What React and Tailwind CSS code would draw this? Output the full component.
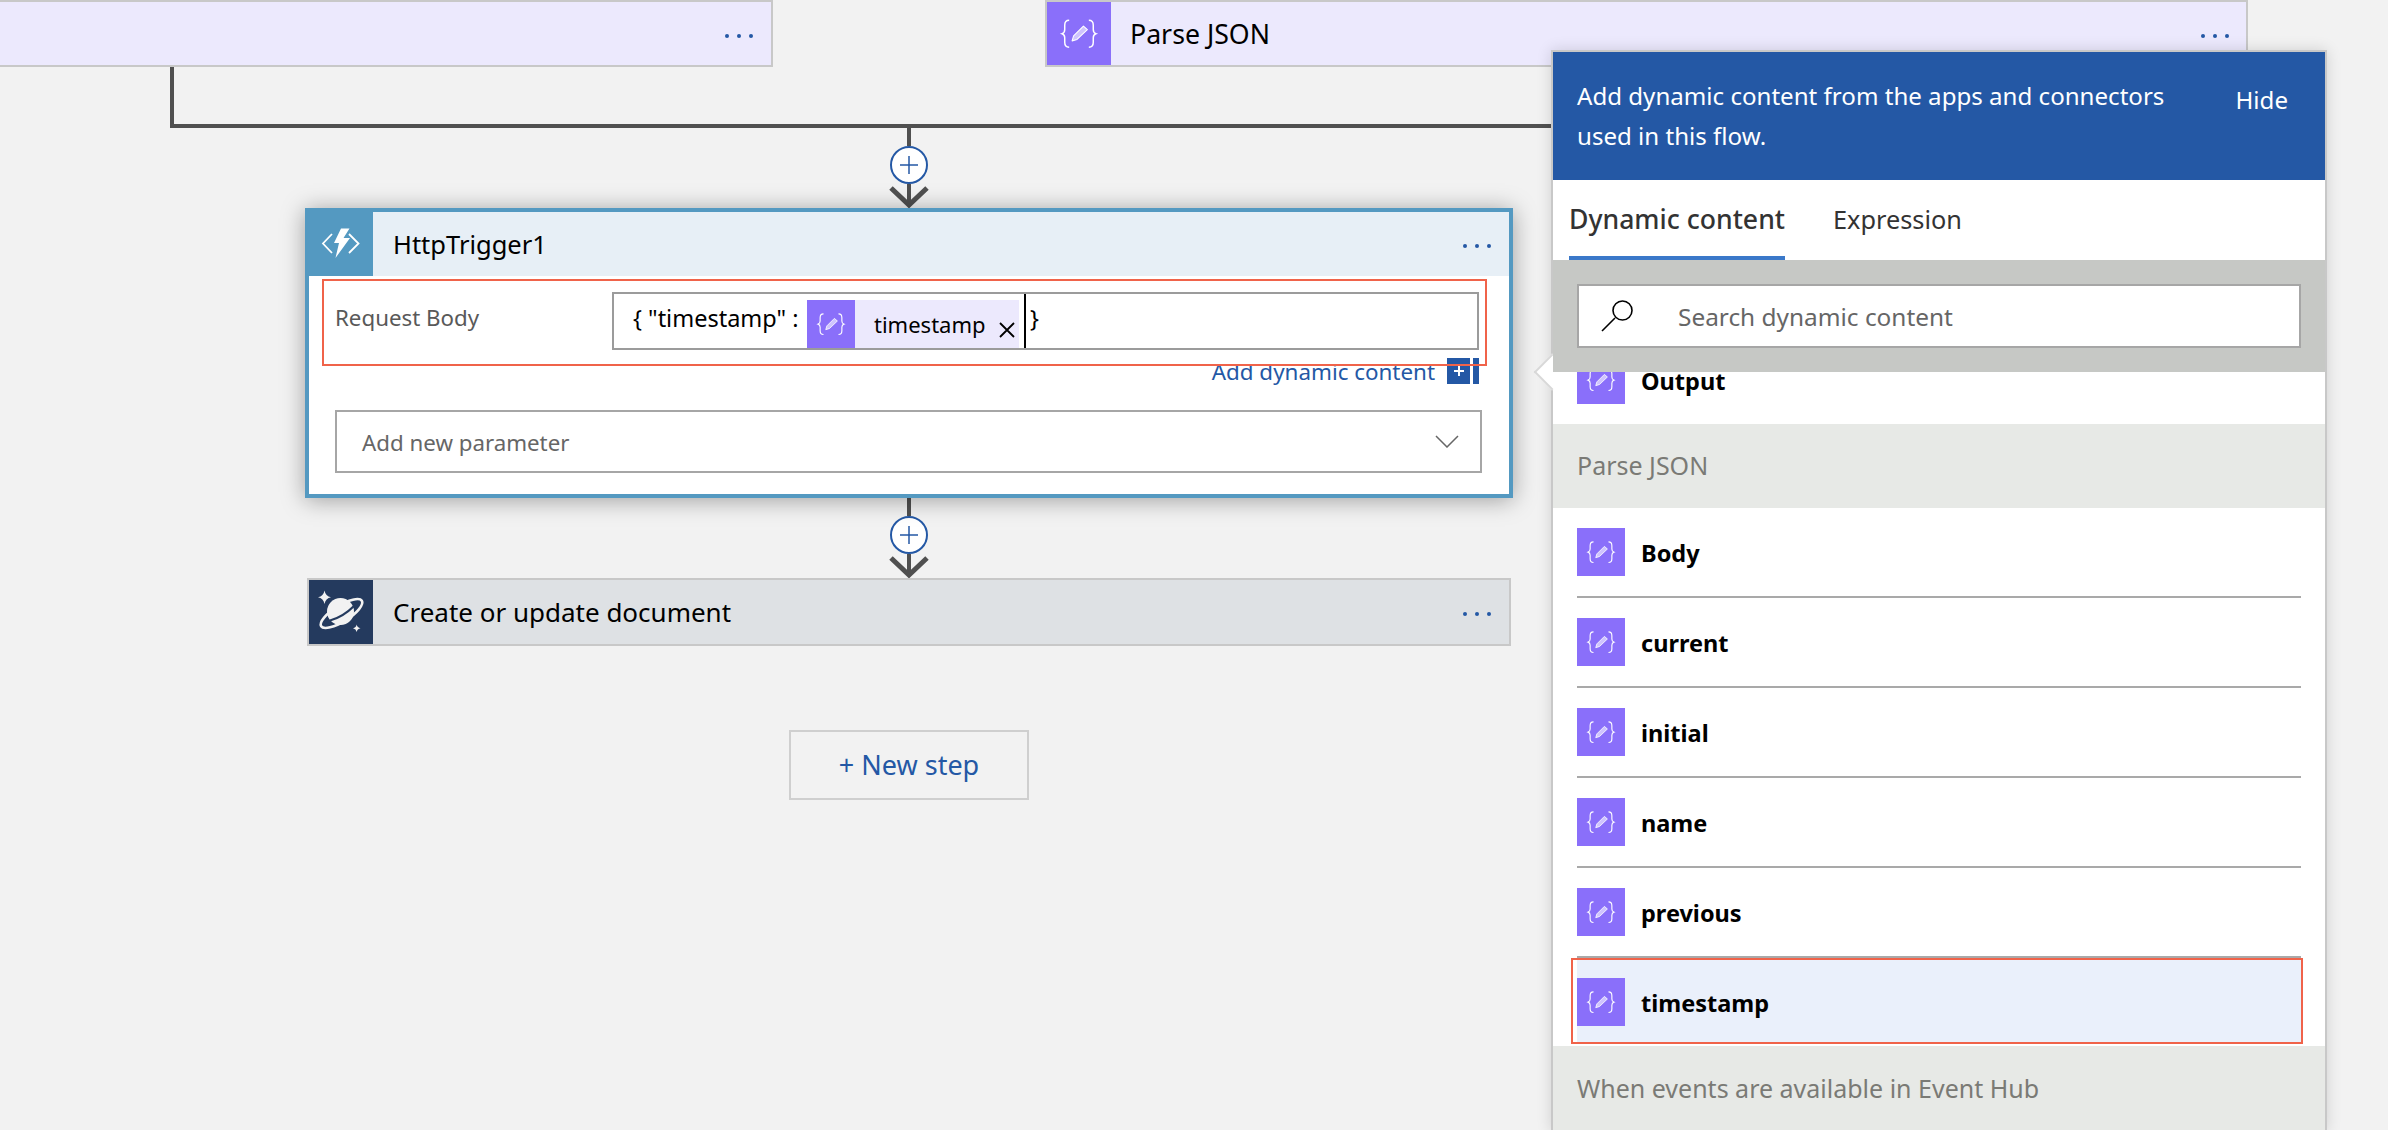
import React from "react";

function Dots() {
  return (
    <div className="flex gap-2 mt-1 shrink-0">
      <span className="size-1 rounded-full bg-[#2458a5]" />
      <span className="size-1 rounded-full bg-[#2458a5]" />
      <span className="size-1 rounded-full bg-[#2458a5]" />
    </div>
  );
}

function ExprGlyph({ className }) {
  return (
    <svg viewBox="0 0 64 64" className={className} fill="none">
      <path d="M22 18.500c-3.500 0-4.500 1.600-4.500 5v4.500c0 2.500-.8 3.600-2.600 4.200 1.800.6 2.600 1.700 2.600 4.200v4.600c0 3.400 1 5 4.500 5" stroke="#fff" strokeWidth="1.500" />
      <path d="M42 18.500c3.500 0 4.500 1.600 4.500 5v4.500c0 2.500.8 3.600 2.600 4.200-1.800.6-2.600 1.700-2.600 4.200v4.600c0 3.400-1 5-4.500 5" stroke="#fff" strokeWidth="1.500" />
      <path d="M36.500 24.500l4 3.500-10.500 10-5 1.500 1.500-5z" fill="#cfc4fe" stroke="#fff" strokeWidth="1.100" strokeLinejoin="round" />
    </svg>
  );
}

function ExprIcon({ box = "size-12" }) {
  return (
    <div className={`${box} bg-[#8a6ffa] shrink-0`}>
      <ExprGlyph className="size-full" />
    </div>
  );
}

function Connector() {
  return (
    <div className="flex flex-col items-center w-10 h-20 shrink-0">
      <div className="w-1 h-[18px] bg-[#505050]" />
      <div className="size-[38px] rounded-full border-2 border-[#2458a5] bg-white flex items-center justify-center shrink-0">
        <svg viewBox="0 0 20 20" className="size-5" fill="none" stroke="#2458a5" strokeWidth="1.500">
          <path d="M10 1v18M1 10h18" />
        </svg>
      </div>
      <svg viewBox="0 0 40 24" className="w-10 h-6 shrink-0" fill="none" stroke="#505050">
        <path d="M20 0v21" strokeWidth="4" />
        <path d="M2 4l18 17L38 4" strokeWidth="5" />
      </svg>
    </div>
  );
}

function Row({ label }) {
  return (
    <div className="mx-6">
      <div className="flex items-center pt-5 pb-5 border-b-2 border-[#a9a9a9]">
        <ExprIcon />
        <span className="ml-4 pt-[3px] text-[23.500px] font-bold text-black leading-none">{label}</span>
      </div>
    </div>
  );
}

export default function App() {
  return (
    <div className="relative w-[2388px] h-[1130px] overflow-hidden bg-[#f2f2f2] font-['Noto_Sans',sans-serif]">
      {/* top cards */}
      <div className="flex">
        <div className="w-[773px] h-[67px] bg-[#ece9fd] border-2 border-l-0 border-[#c8c8c8] flex items-center justify-end pr-[18px]">
          <Dots />
        </div>
        <div className="ml-[272px] w-[1203px] h-[67px] bg-[#ece9fd] border-2 border-[#c8c8c8] flex items-center pr-[17px]">
          <div className="w-16 h-full bg-[#8a6ffa] shrink-0">
            <ExprGlyph className="size-full" />
          </div>
          <span className="ml-[19px] pt-[2px] flex-1 text-[26.700px] text-black">Parse JSON</span>
          <Dots />
        </div>
      </div>

      {/* branch join */}
      <div className="ml-[170px] w-[1400px] h-[61px] border-l-4 border-b-4 border-[#505050]" />

      {/* flow column */}
      <div className="ml-[305px] w-[1208px] flex flex-col items-center">
        <Connector />

        <div className="relative w-full h-[290px] border-4 border-[#5499c1] bg-white shadow-[0_2px_22px_rgba(0,0,0,0.35)]">
          <div className="flex items-center h-16 bg-[#e7eff6] pr-[18px]">
            <div className="w-16 h-full bg-[#5499c1] shrink-0">
              <svg viewBox="9 7 64 64" className="size-full" fill="none">
                <path d="M32 29L23 38.500L32 48M49 29L58.500 38.500L49 48" stroke="#fff" strokeWidth="1.800" />
                <path d="M41 23.500L49.500 23.500L43.500 33L50 33L35.500 53L39 38L34 38Z" fill="#fff" />
              </svg>
            </div>
            <span className="ml-5 flex-1 text-[25.500px] text-black">HttpTrigger1</span>
            <Dots />
          </div>

          <div className="pl-[26px] pr-[30px]">
            <div className="flex mt-4 h-[58px]">
              <span className="w-[277px] shrink-0 pt-[11px] text-[22.300px] text-[#595959] leading-[30px]">Request Body</span>
              <div className="flex flex-1 items-end border-2 border-[#9b9b9b] pl-[19px]">
                <span className="self-start w-[174px] shrink-0 pt-[9px] text-[23.500px] leading-[30px] text-black whitespace-pre">{'{ "timestamp" :'}</span>
                <div className="flex h-12 w-[212px] shrink-0 bg-[#ece9fd]">
                  <ExprIcon />
                  <span className="ml-[19px] w-[113px] pt-[9px] text-[22px] leading-[30px] text-black">timestamp</span>
                  <svg viewBox="0 0 18 16" className="ml-[11px] mt-[22px] w-[18px] h-4" stroke="#000" strokeWidth="1.800" fill="none">
                    <path d="M2 1l14 14M16 1L2 15" />
                  </svg>
                </div>
                <div className="ml-[5px] w-0.5 h-full bg-black" />
                <span className="self-start ml-[4px] pt-[9px] text-[23.500px] leading-[30px] text-black">{"}"}</span>
              </div>
            </div>

            <div className="flex justify-end items-center gap-3 mt-2 h-[26px]">
              <span className="pt-[2px] text-[22.400px] leading-none text-[#2458a5]">Add dynamic content</span>
              <div className="flex h-[26px] gap-[3px]">
                <div className="w-[23px] bg-[#2458a5] flex items-center justify-center">
                  <svg viewBox="0 0 12 12" className="size-3" stroke="#fff" strokeWidth="2">
                    <path d="M6 1v10M1 6h10" />
                  </svg>
                </div>
                <div className="w-1.5 bg-[#2458a5]" />
              </div>
            </div>

            <div className="flex items-center justify-between mt-[26px] mr-[-3px] h-[63px] border-2 border-[#a6a6a6] pl-[25px] pr-[21px]">
              <span className="text-[22.300px] text-[#666666] pt-[2px]">Add new parameter</span>
              <svg viewBox="0 0 24 13" className="w-6 h-[13px]" fill="none" stroke="#666666" strokeWidth="1.500">
                <path d="M1 1l11 11L23 1" />
              </svg>
            </div>
          </div>

          {/* annotation */}
          <div className="absolute left-[13px] top-[67px] w-[1165px] h-[87px] border-2 border-[#f0634a] pointer-events-none" />
        </div>

        <Connector />

        <div className="w-[1204px] h-[68px] bg-[#dee1e4] border-2 border-[#c8c8c8] flex items-center pr-[18px]">
          <div className="w-16 h-full bg-[#243a5e] shrink-0">
            <svg viewBox="9 10 64 64" className="size-full" fill="none">
              <path d="M24.500 20.500Q25.500 26.300 31 27.300Q25.500 28.300 24.500 34Q23.500 28.300 18 27.300Q23.500 26.300 24.500 20.500Z" fill="#f2f2f2" />
              <path d="M56.700 54.500Q57.300 57.700 60.500 58.300Q57.300 58.900 56.700 62Q56.100 58.900 53 58.300Q56.100 57.700 56.700 54.500Z" fill="#f2f2f2" />
              <ellipse cx="41.500" cy="43.500" rx="24" ry="8" transform="rotate(-32 41.500 43.500)" stroke="#f2f2f2" strokeWidth="2.600" />
              <circle cx="40.500" cy="41.500" r="13.500" fill="#f2f2f2" />
              <path d="M30 50.500Q43 47 54 36" stroke="#243a5e" strokeWidth="2.200" />
            </svg>
          </div>
          <span className="ml-5 flex-1 text-[26px] text-black">Create or update document</span>
          <Dots />
        </div>

        <div className="mt-[84px] w-[240px] h-[70px] border-2 border-[#cfcfcf] flex items-center justify-center text-[27px] text-[#2458a5]">
          + New step
        </div>
      </div>

      {/* dynamic content panel */}
      <div className="absolute left-[1551px] top-[50px] w-[776px] h-[1082px] border-2 border-[#c8c8c8] bg-white shadow-[0_0_14px_rgba(0,0,0,0.14)] flex flex-col">
        <div className="absolute left-[-14px] top-[307px] size-[26px] rotate-45 bg-white border-l-2 border-b-2 border-[#d8d8d8]" />

        <div className="relative z-10 flex justify-between h-[128px] bg-[#2458a5] pl-6 pr-[37px] text-white text-[24.100px]">
          <p className="w-[620px] pt-[24px] leading-[40px]">Add dynamic content from the apps and connectors used in this flow.</p>
          <span className="pt-[32px] leading-[32px]">Hide</span>
        </div>

        <div className="relative z-10 flex h-20 bg-white pl-4 text-[#333333]">
          <div className="flex items-center w-[216px] justify-center pt-[3px] border-b-4 border-[#3a78c9] font-medium text-[26.600px] whitespace-nowrap">Dynamic content</div>
          <div className="flex items-center ml-12 text-[25.300px]">Expression</div>
        </div>

        <div className="relative z-10 h-28 bg-[#c6c8c5] px-6 pt-6">
          <div className="flex items-center h-16 border-2 border-[#a6a6a6] bg-white pl-[22px]">
            <svg viewBox="0 0 32 32" className="size-8 shrink-0" fill="none" stroke="#000" strokeWidth="1.600">
              <circle cx="21.500" cy="10.500" r="9.500" />
              <path d="M14 18L1 31" />
            </svg>
            <span className="ml-[45px] pt-[2px] text-[24.400px] text-[#666666]">Search dynamic content</span>
          </div>
        </div>

        <div className="relative flex-1 flex flex-col">
          <div className="mx-6 mt-[-16px] flex items-center pb-5">
            <ExprIcon />
            <span className="ml-4 pt-[3px] text-[23.500px] font-bold text-black leading-none">Output</span>
          </div>
          <div className="flex items-center h-[84px] bg-[#e7e9e6] pl-6 text-[25px] text-[#7a7a75]">Parse JSON</div>
          <Row label="Body" />
          <Row label="current" />
          <Row label="initial" />
          <Row label="name" />
          <Row label="previous" />
          <div className="relative">
            <div className="mx-6 h-[86px] mb-0.5 pt-5 bg-[#eaf0fb] flex items-start">
              <ExprIcon />
              <span className="ml-4 pt-[1px] text-[23.500px] font-bold text-black leading-[48px]">timestamp</span>
            </div>
            <div className="absolute left-[18px] right-[22px] top-0 h-[86px] border-2 border-[#f0634a] pointer-events-none" />
          </div>
          <div className="flex-1 bg-[#e7e9e6] pl-6 pt-[24px] text-[25px] leading-[36px] text-[#7a7a75]">When events are available in Event Hub</div>
        </div>
      </div>
    </div>
  );
}
